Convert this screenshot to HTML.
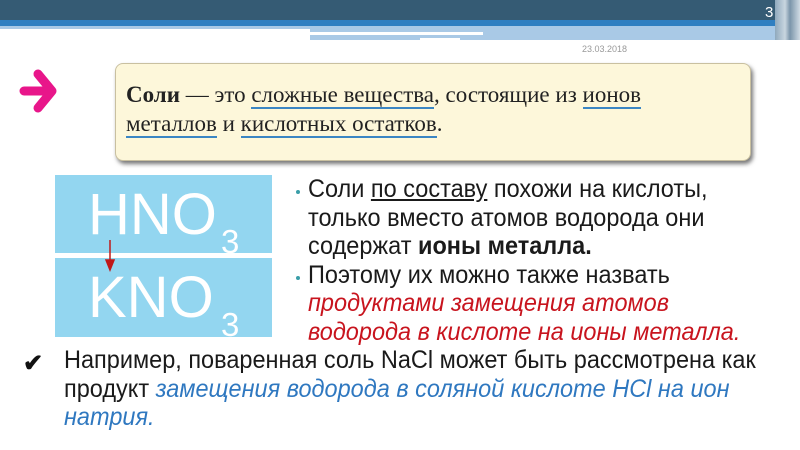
<!DOCTYPE html>
<html><head><meta charset="utf-8"><style>
body{margin:0;width:800px;height:450px;overflow:hidden;background:#fff;font-family:"Liberation Sans",sans-serif;position:relative}
.a{position:absolute}
.t{font-size:25px;color:#1a1a1a;white-space:nowrap;transform-origin:0 0;transform:scaleX(0.94)}
.red{color:#c8141e;font-style:italic}
.blu{color:#2f78c0;font-style:italic}
.ser{font-family:"Liberation Serif",serif;font-size:23px;line-height:23px;color:#222;white-space:nowrap}
.ul{border-bottom:2px solid #3b86c4}
.f{color:#fff;font-size:58px;line-height:58px}
.s{color:#fff;font-size:33px;line-height:33px}
.box{position:absolute;left:55px;width:217px;background:#93d6f0;overflow:hidden}
</style></head><body>
<div class="a" style="left:0;top:0;width:800px;height:20px;background:#355b74"></div>
<div class="a" style="left:0;top:20px;width:800px;height:6px;background:#2f7fc1"></div>
<div class="a" style="left:0;top:26px;width:800px;height:3px;background:#a9c9e6"></div>
<div class="a" style="left:310px;top:26px;width:490px;height:14px;background:#a9c9e6"></div>
<div class="a" style="left:310px;top:32px;width:173px;height:3px;background:#fff"></div>
<div class="a" style="left:420px;top:38px;width:40px;height:2px;background:#fff"></div>
<div class="a" style="left:775px;top:0;width:25px;height:40px;background:linear-gradient(90deg,#8fa9bd,#c9d6e0 40%,#7b95aa 60%,#d0dbe4)"></div>
<div class="a" style="left:765px;top:4px;color:#fff;font-size:15px">3</div>
<div class="a" style="left:582px;top:44px;color:#999;font-size:9px">23.03.2018</div>
<svg class="a" style="left:18px;top:66px" width="40" height="50" viewBox="0 0 40 50"><path d="M6 25H32M20 8L34 25L20 42" fill="none" stroke="#e8168a" stroke-width="9" stroke-linecap="round" stroke-linejoin="round"/></svg>
<div class="a" style="left:115px;top:63px;width:634px;height:96px;background:#fdf7da;border:1px solid #c9c0a0;border-radius:8px;box-shadow:2px 3px 4px #777"></div>
<div class="a ser" style="left:126px;top:83px"><b>Соли</b> — это <span class="ul">сложные вещества</span>, состоящие из <span class="ul">ионов</span></div>
<div class="a ser" style="left:126px;top:112px"><span class="ul">металлов</span> и <span class="ul">кислотных остатков</span>.</div>
<div class="box" style="top:175px;height:78px">
 <div class="a f" style="left:33px;top:11px">HNO</div>
 <div class="a s" style="left:166px;top:50px">3</div>
</div>
<div class="box" style="top:258px;height:79px">
 <div class="a f" style="left:33px;top:11px">KNO</div>
 <div class="a s" style="left:166px;top:50px">3</div>
</div>
<svg class="a" style="left:103px;top:240px" width="14" height="32"><path d="M7 0V28M3 20L7 30L11 20Z" fill="#c01818" stroke="#c01818" stroke-width="1.5"/></svg>
<div class="a" style="left:296px;top:190px;width:4px;height:4px;border-radius:2px;background:#3a9ea8"></div>
<div class="a" style="left:296px;top:276px;width:4px;height:4px;border-radius:2px;background:#3a9ea8"></div>
<div class="a t" style="left:308px;top:175px">Соли <u>по составу</u> похожи на кислоты,</div>
<div class="a t" style="left:308px;top:204px">только вместо атомов водорода они</div>
<div class="a t" style="left:308px;top:232px">содержат <b>ионы металла.</b></div>
<div class="a t" style="left:308px;top:261px">Поэтому их можно также назвать</div>
<div class="a t red" style="left:308px;top:289px">продуктами замещения атомов</div>
<div class="a t red" style="left:308px;top:318px">водорода в кислоте на ионы металла.</div>
<div class="a" style="left:23px;top:349px;font-size:24px;color:#111;font-weight:bold">✔</div>
<div class="a t" style="left:64px;top:346px">Например, поваренная соль NaCl может быть рассмотрена как</div>
<div class="a t" style="left:64px;top:375px">продукт <span class="blu">замещения водорода в соляной кислоте HCl на ион</span></div>
<div class="a t blu" style="left:64px;top:403px">натрия.</div>
</body></html>
